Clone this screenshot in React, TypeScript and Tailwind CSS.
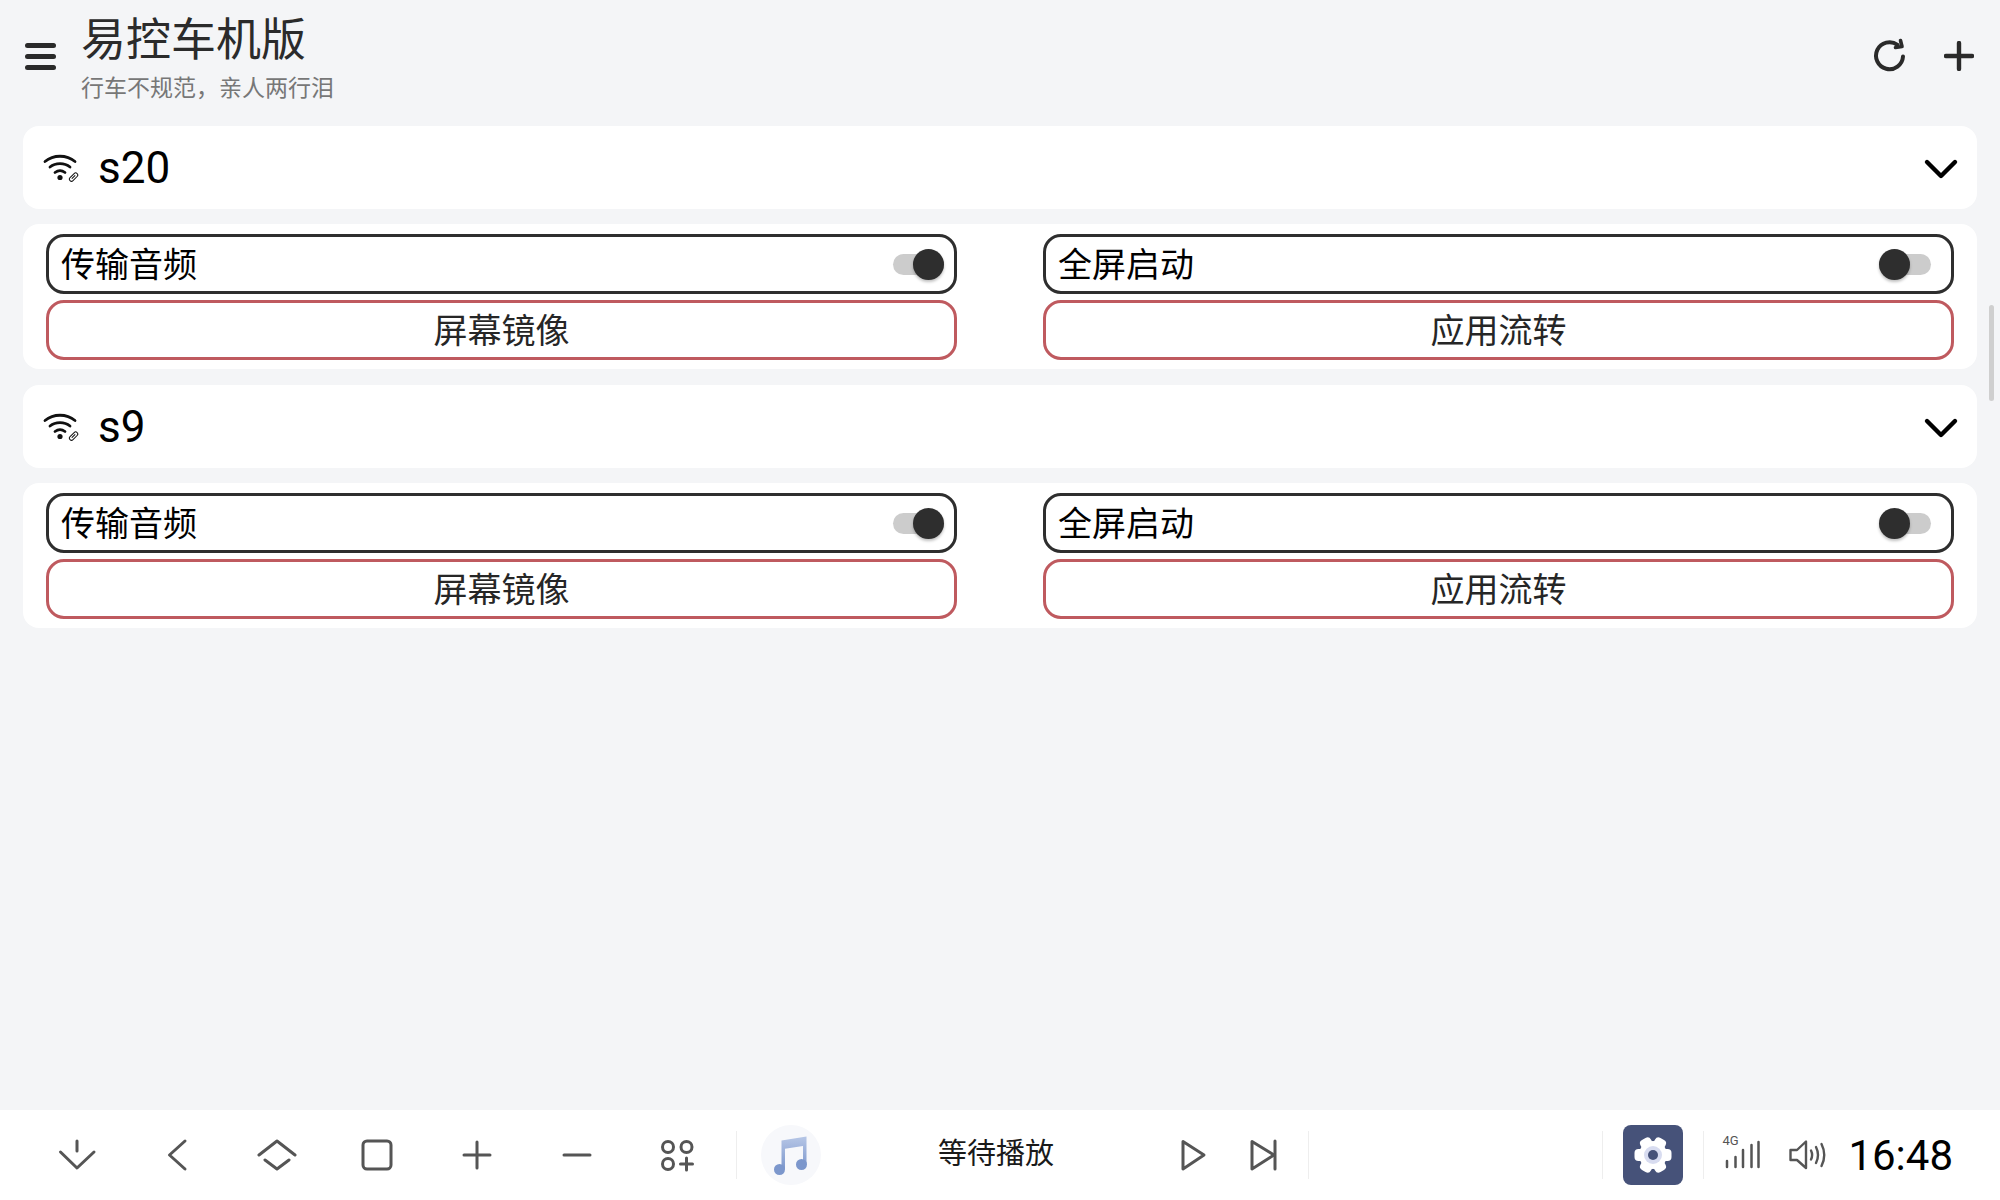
import React from 'react';

const Toggle = ({ on }: { on: boolean }) => {
  return (
    <div className={on ? 'relative w-[51px] h-[21px] rounded-full bg-[#cccccc] mr-[10px]' : 'relative w-[52px] h-[21px] rounded-full bg-[#cccccc] mr-[20px]'}>
      <div className={on ? 'absolute right-0 top-[-5px] w-[31px] h-[31px] rounded-full bg-[#2e2e2e] shadow-[0_2px_3px_rgba(0,0,0,0.25)]' : 'absolute left-0 top-[-5px] w-[31px] h-[31px] rounded-full bg-[#2e2e2e] shadow-[0_2px_3px_rgba(0,0,0,0.25)]'} />
    </div>
  );
};

const Wifi = () => (
  <svg width="36" height="30" viewBox="0 0 36 30" fill="none" stroke="#111" strokeWidth="2.8" strokeLinecap="round">
    <path d="M2 8.5C10.5 1.5 23.5 1.5 32 8.5" />
    <path d="M7 14C12.5 9.5 21.5 9.5 27 14" />
    <path d="M12 19.5C15 17.2 19 17.2 22 19.5" />
    <circle cx="17" cy="24.5" r="2.6" fill="#111" stroke="none" />
    <g transform="rotate(-45 30.5 24)" strokeWidth="1">
      <rect x="25.5" y="22" width="10" height="4.2" rx="2.1" />
      <path d="M28.5 24h4" />
    </g>
  </svg>
);

const Chevron = () => (
  <svg width="36" height="24" viewBox="0 0 36 24" fill="none" stroke="#000" strokeWidth="4.4" strokeLinecap="round" strokeLinejoin="round">
    <path d="M4 5L18 19L32 5" />
  </svg>
);

const Device = ({ name }: { name: string }) => {
  return (
    <div className="flex flex-col gap-[15px]">
      <div className="flex items-center h-[83px] bg-white rounded-[16px] pl-[20px] pr-[18px]">
        <Wifi />
        <span className="ml-[19px] text-[44px] leading-none text-black">{name}</span>
        <div className="ml-auto mt-[3px]">
          <Chevron />
        </div>
      </div>
      <div className="grid grid-cols-2 gap-x-[86px] gap-y-[6px] bg-white rounded-[16px] px-[23px] pt-[10px] pb-[9px]">
        <div className="flex items-center justify-between h-[60px] border-[3px] border-[#2e2e2e] rounded-[18px] pl-[12px]">
          <span className="text-[34px] text-black pt-[3px]">传输音频</span>
          <Toggle on={true} />
        </div>
        <div className="flex items-center justify-between h-[60px] border-[3px] border-[#2e2e2e] rounded-[18px] pl-[12px]">
          <span className="text-[34px] text-black pt-[3px]">全屏启动</span>
          <Toggle on={false} />
        </div>
        <div className="flex items-center justify-center h-[60px] border-[3px] border-[#bf5a5f] rounded-[18px] text-[34px] text-[#262626] pt-[3px]">屏幕镜像</div>
        <div className="flex items-center justify-center h-[60px] border-[3px] border-[#bf5a5f] rounded-[18px] text-[34px] text-[#262626] pt-[3px]">应用流转</div>
      </div>
    </div>
  );
};

const BarIcon = ({ children }: { children: React.ReactNode }) => (
  <div className="w-[100px] flex justify-center">
    <svg width="40" height="40" viewBox="0 0 40 40" fill="none" stroke="#555" strokeWidth="3" strokeLinecap="round" strokeLinejoin="round">
      {children}
    </svg>
  </div>
);

const App = () => {
  return (
    <div className="relative flex flex-col h-screen bg-[#f4f5f7] font-['Roboto','Noto_Sans_CJK_SC',sans-serif]">
      <header className="flex items-start h-[126px] shrink-0 pl-[25px] pr-[26px]">
        <div className="flex flex-col gap-[6px] w-[31px] mt-[43px]">
          <div className="h-[5px] rounded-full bg-[#2a2a2a]" />
          <div className="h-[5px] rounded-full bg-[#2a2a2a]" />
          <div className="h-[5px] rounded-full bg-[#2a2a2a]" />
        </div>
        <div className="ml-[25px] mt-[16px]">
          <div className="text-[45px] leading-[50px] text-[#2b2b2b]">易控车机版</div>
          <div className="text-[23px] leading-[28px] mt-[9px] text-[#777]">行车不规范，亲人两行泪</div>
        </div>
        <div className="ml-auto flex items-center gap-[35px] mt-[38px]">
          <svg width="36" height="36" viewBox="0 0 36 36" fill="none" stroke="#2a2a2a" strokeWidth="4" strokeLinecap="round" strokeLinejoin="round">
            <path d="M30 18.5A13.5 13.5 0 1 1 24.5 6.8" />
            <path d="M22.5 9.5L29 8.5L27.5 2.5" strokeWidth="3.6" />
          </svg>
          <svg width="30" height="30" viewBox="0 0 30 30" fill="none" stroke="#2a2a2a" strokeWidth="4.4" strokeLinecap="round">
            <path d="M15 2V28M2 15H28" />
          </svg>
        </div>
      </header>

      <main className="flex-1 flex flex-col gap-[16px] px-[23px]">
        <Device name="s20" />
        <Device name="s9" />
      </main>

      <div className="absolute left-[1989px] top-[305px] w-[5px] h-[96px] rounded-full bg-[#cfcfcf]" />

      <footer className="flex items-center h-[90px] shrink-0 bg-white pl-[27px]">
        <BarIcon>
          <path d="M20 6V16M3.5 17L20 33L37 17" />
        </BarIcon>
        <BarIcon>
          <path d="M28 6L12.5 20L28 34" />
        </BarIcon>
        <BarIcon>
          <path d="M2 20L20 6L38 20M8 25L20 34L32 25" />
        </BarIcon>
        <BarIcon>
          <rect x="6" y="6" width="28" height="28" rx="4" />
        </BarIcon>
        <BarIcon>
          <path d="M20 7V33M7 20H33" />
        </BarIcon>
        <BarIcon>
          <path d="M7 20H33" />
        </BarIcon>
        <BarIcon>
          <circle cx="11" cy="12" r="5.5" />
          <circle cx="29.5" cy="12" r="5.5" />
          <circle cx="11" cy="29" r="5.5" />
          <path d="M29.5 23V35M23.5 29H35.5" />
        </BarIcon>

        <div className="w-px h-[48px] ml-[9px] bg-[#eeeeee]" />
        <div className="w-[60px] h-[60px] ml-[24px] rounded-full bg-[#f7f8fb]">
          <svg width="60" height="60" viewBox="0 0 60 60">
            <defs>
              <linearGradient id="note" x1="0" y1="0" x2="0" y2="1">
                <stop offset="0" stopColor="#b6c6e6" />
                <stop offset="1" stopColor="#7c97cc" />
              </linearGradient>
            </defs>
            <path d="M20.5 15.5L45.5 11.5V39.5H42V21L24 23.8V44.5H20.5Z" fill="url(#note)" />
            <circle cx="18.5" cy="44.5" r="5.5" fill="#7c97cc" />
            <circle cx="40.5" cy="39.5" r="5.5" fill="#7c97cc" />
          </svg>
        </div>
        <span className="ml-[117px] text-[29px] text-[#1a1a1a]">等待播放</span>

        <svg className="ml-[122px]" width="36" height="40" viewBox="0 0 36 40" fill="none" stroke="#555" strokeWidth="3" strokeLinecap="round" strokeLinejoin="round">
          <path d="M7 6.5L28 20L7 34Z" />
        </svg>
        <svg className="ml-[33px]" width="36" height="40" viewBox="0 0 36 40" fill="none" stroke="#555" strokeWidth="3" strokeLinecap="round" strokeLinejoin="round">
          <path d="M7 6.5L29 20L7 34Z" />
          <path d="M30 6V34" />
        </svg>
        <div className="w-px h-[48px] ml-[27px] bg-[#eeeeee]" />

        <div className="w-px h-[48px] ml-auto bg-[#eeeeee]" />
        <div className="flex items-center justify-center w-[60px] h-[60px] ml-[20px] rounded-[8px] bg-[#465279]">
          <svg width="44" height="44" viewBox="0 0 44 44">
            <g fill="#fff">
              <circle cx="22" cy="22" r="14" />
              <rect x="16" y="3.5" width="12" height="37" rx="4" transform="rotate(30 22 22)" />
              <rect x="16" y="3.5" width="12" height="37" rx="4" transform="rotate(90 22 22)" />
              <rect x="16" y="3.5" width="12" height="37" rx="4" transform="rotate(150 22 22)" />
            </g>
            <circle cx="22" cy="22" r="9" fill="#d8dcf0" />
            <circle cx="22" cy="22" r="5" fill="#465279" />
          </svg>
        </div>
        <div className="w-px h-[48px] ml-[20px] bg-[#eeeeee]" />

        <div className="relative w-[42px] h-[40px] ml-[18px]">
          <span className="absolute left-0 top-[-1px] text-[13px] leading-[14px] text-[#555]">4G</span>
          <svg width="42" height="40" viewBox="0 0 42 40" fill="none" stroke="#555" strokeWidth="2.5" strokeLinecap="round">
            <path d="M5 32V26M13.5 32V22M21 32V15M29.5 32V10M36.5 32V7" />
          </svg>
        </div>
        <svg className="ml-[21px]" width="45" height="40" viewBox="0 0 45 40" fill="none" stroke="#555" strokeWidth="2.4" strokeLinecap="round" strokeLinejoin="round">
          <path d="M5.5 15H12L21 6.5V33L12 25H5.5Z" />
          <path d="M26 15.5C27.5 18.5 27.5 21.5 26 24.5" />
          <path d="M31 12C33.5 17 33.5 23 31 28" />
          <path d="M36.5 9C40 16 40 24 36.5 31" />
        </svg>
        <span className="ml-[18px] mr-[47px] text-[42px] text-black">16:48</span>
      </footer>
    </div>
  );
};

export default App;
